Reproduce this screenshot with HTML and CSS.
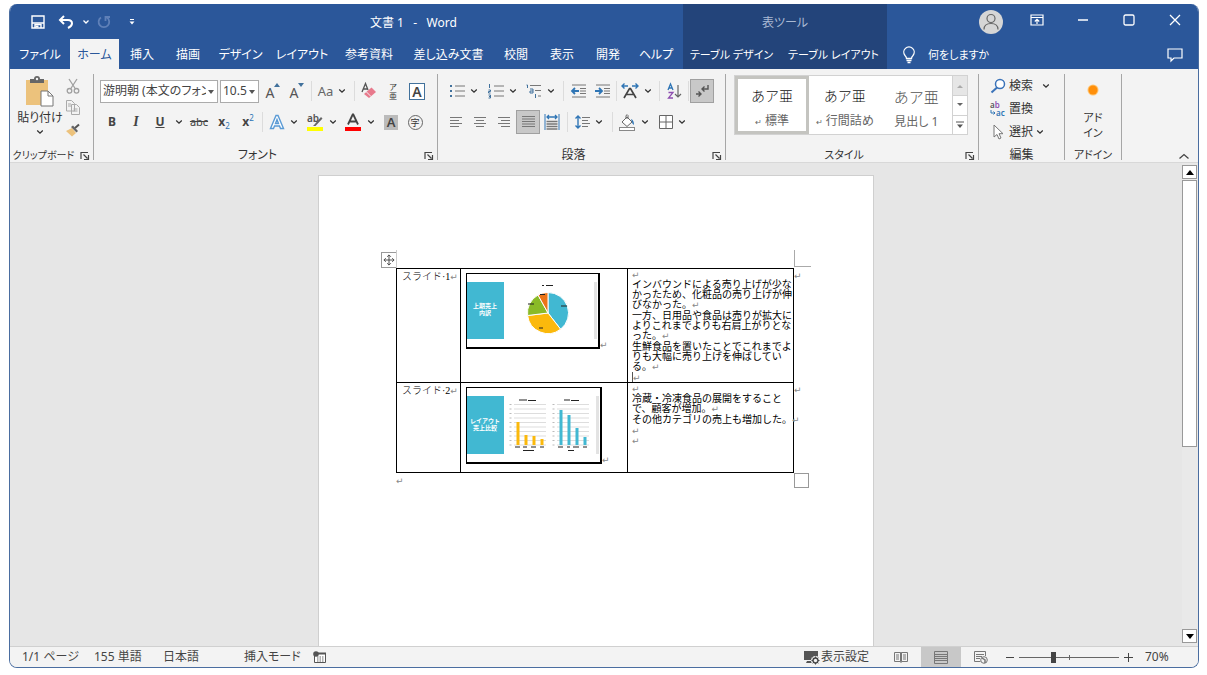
FILE: index.html
```html
<!DOCTYPE html>
<html lang="ja">
<head>
<meta charset="utf-8">
<title>文書 1 - Word</title>
<link rel="stylesheet" href="styles.css">
</head>
<body>
<svg width="0" height="0" class="defs" aria-hidden="true">
  <symbol id="chev" viewBox="0 0 8 6"><path d="M1.2 1.5 4 4.2 6.8 1.5" fill="none" stroke="#333" stroke-width="1.3"/></symbol>
  <symbol id="launch" viewBox="0 0 10 10"><path d="M1 8V1.5h7M3.500 3.500l4 4M8.500 4v4.500H4" fill="none" stroke="#444" stroke-width="1.200"/></symbol>
</svg>
<div class="window">
  <header class="head">
    <div class="head-left">
      <div class="titlebar">
        <div class="quick">
          <button class="qb" aria-label="保存"><svg width="14" height="14" viewBox="0 0 14 14" fill="none" stroke="#fff" stroke-width="1.400"><path d="M1 1h12v12H1zM1.500 8h11"/><path d="M4 13V9.500h6V13"/><path d="M4.500 11.500h3" stroke-width="2"/></svg></button>
          <button class="qb undo" aria-label="元に戻す"><svg width="16" height="14" viewBox="0 0 16 14" fill="none" stroke="#fff" stroke-width="2"><path d="M6 1 2 5l4 4M2.500 5H10q4 0 4 3.500Q14 11 10 13"/></svg></button>
          <button class="qc" aria-label="元に戻す一覧"><svg width="8" height="6" viewBox="0 0 8 6"><path d="M1.500 1.500 4 4l2.500-2.500" fill="none" stroke="#fff" stroke-width="1.300"/></svg></button>
          <button class="qb" aria-label="やり直し"><svg width="14" height="14" viewBox="0 0 14 14" fill="none" stroke="#5f80b8" stroke-width="1.800"><path d="M4 2.500A5.300 5.300 0 1 0 10 2.600M8.500 6V2h4.500"/></svg></button>
          <button class="qb" aria-label="カスタマイズ"><svg width="8" height="8" viewBox="0 0 8 8"><path d="M2 1.500h4" stroke="#fff"/><path d="M1.500 3.500h5L4 6.500z" fill="#fff"/></svg></button>
        </div>
        <h1 class="title">文書 1 &nbsp; - &nbsp; Word</h1>
      </div>
      <nav class="tabs">
        <button>ファイル</button><button class="on">ホーム</button><button>挿入</button><button>描画</button><button>デザイン</button><button>レイアウト</button><button>参考資料</button><button>差し込み文書</button><button>校閲</button><button>表示</button><button>開発</button><button>ヘルプ</button>
      </nav>
    </div>
    <div class="head-ctx">
      <div class="ctx-title">表ツール</div>
      <nav class="ctx-tabs"><button>テーブル デザイン</button><button>テーブル レイアウト</button></nav>
    </div>
    <div class="head-right">
      <div class="wincontrols">
        <button class="avatar" aria-label="アカウント"><svg width="24" height="24" viewBox="0 0 24 24"><circle cx="12" cy="12" r="12" fill="#d6d6d6"/><g fill="none" stroke="#666" stroke-width="1.200"><circle cx="12" cy="8.500" r="4"/><path d="M5 19.500q0-6 7-6t7 6"/></g></svg></button>
        <button aria-label="リボンの表示オプション"><svg width="14" height="12" viewBox="0 0 14 12" fill="none" stroke="#fff" stroke-width="1.200"><path d="M1 1h12v10H1zM1 3.500h12M7 10V5.500M4.800 7.500 7 5.300l2.200 2.200"/></svg></button>
        <button aria-label="最小化"><svg width="12" height="12" viewBox="0 0 12 12"><path d="M1 6h10" stroke="#fff" stroke-width="1.400"/></svg></button>
        <button aria-label="最大化"><svg width="12" height="12" viewBox="0 0 12 12"><rect x="1" y="1" width="10" height="10" rx="1.500" fill="none" stroke="#fff" stroke-width="1.300"/></svg></button>
        <button aria-label="閉じる"><svg width="12" height="12" viewBox="0 0 12 12"><path d="m1 1 10 10M11 1 1 11" stroke="#fff" stroke-width="1.300"/></svg></button>
      </div>
      <div class="askrow">
        <button class="ask"><svg width="14" height="18" viewBox="0 0 14 18" fill="none" stroke="#fff" stroke-width="1.300"><path d="M4.500 12.500Q4.500 11 3 9.500A5.200 5.200 0 1 1 11 9.500Q9.500 11 9.500 12.500zM4.500 14.500h5M5.500 16.500h3"/></svg><span>何をしますか</span></button>
        <button aria-label="コメント"><svg width="16" height="14" viewBox="0 0 16 14" fill="none" stroke="#fff" stroke-width="1.200"><path d="M1 1h14v9H7l-3 3v-3H1z"/></svg></button>
      </div>
    </div>
  </header>

  <section class="ribbon">
    <div class="group">
      <div class="body clip">
        <button class="paste"><svg width="30" height="32" viewBox="0 0 30 32"><rect x="1" y="4" width="22" height="25" fill="#ecc27c"/><path d="M5 3h4q0-3 3-3t3 3h4v4H5z" fill="#666"/><circle cx="12" cy="3" r="1.200" fill="#f3f3f3"/><path d="M16 15h7l5 5v10H16z" fill="#fff" stroke="#777"/><path d="M23 15v5h5" fill="none" stroke="#777"/></svg><span>貼り付け</span><svg width="8" height="6"><use href="#chev"/></svg></button>
        <div class="clipcol">
          <button aria-label="切り取り"><svg width="14" height="15" viewBox="0 0 14 15" fill="none" stroke="#a0a0a0" stroke-width="1.300"><path d="M3 0l6.500 10M11 0 4.500 10"/><circle cx="3.500" cy="11.800" r="2.300"/><circle cx="10.500" cy="11.800" r="2.300"/></svg></button>
          <button aria-label="コピー"><svg width="15" height="15" viewBox="0 0 15 15" fill="#f3f3f3" stroke="#aaa"><path d="M.5.5h5l3 3V11h-8zM5.500 4.500h5l3 3v7h-8z"/><path d="M2 4h3M2 6h3M7.500 9h4M7.500 11h4"/></svg></button>
          <button aria-label="書式のコピー"><svg width="14" height="13" viewBox="0 0 14 13"><path d="m0 7 6-3 4 5-4 3.500z" fill="#ecc27c"/><path d="m5 3 2-1.500 5 5.500-1.500 1.500z" fill="#666"/><path d="m9 4 4-3.500" stroke="#555" stroke-width="2"/></svg></button>
        </div>
      </div>
      <div class="foot"><span class="tiny">クリップボード</span><button aria-label="クリップボードの設定"><svg width="10" height="10"><use href="#launch"/></svg></button></div>
    </div>

    <div class="group">
      <div class="body rows fontrows">
        <div class="row">
          <label class="combo family"><select aria-label="フォント"><option>游明朝 (本文のフォント)</option></select><svg width="6" height="4" viewBox="0 0 6 4"><path d="M0 0h6L3 4z" fill="#555"/></svg></label>
          <label class="combo size"><select aria-label="フォント サイズ"><option>10.5</option></select><svg width="6" height="4" viewBox="0 0 6 4"><path d="M0 0h6L3 4z" fill="#555"/></svg></label>
          <button class="ib ltr" aria-label="拡大">A<svg class="mark" width="6" height="4" viewBox="0 0 6 4"><path d="M0 4h6L3 0z" fill="#41719c"/></svg></button>
          <button class="ib ltr" aria-label="縮小">A<svg class="mark" width="6" height="4" viewBox="0 0 6 4"><path d="M0 0h6L3 4z" fill="#41719c"/></svg></button>
          <i class="sep"></i>
          <button class="split"><span class="aa">Aa</span><svg width="8" height="6"><use href="#chev"/></svg></button>
          <i class="sep"></i>
          <button class="ib" aria-label="書式のクリア"><svg width="18" height="18" viewBox="0 0 18 18"><path d="m2 10 3.500-8.500L8 8M3.500 7h4" fill="none" stroke="#555" stroke-width="1.300"/><path d="m4 12 7.500-6.500 4.500 4.500-7 6z" fill="#e8798c"/><path d="m6.500 10 4.500 4.500" stroke="#f3f3f3"/></svg></button>
          <button class="ib ruby"><span>ア</span><span>亜</span></button>
          <button class="ib"><span class="boxed">A</span></button>
        </div>
        <div class="row">
          <button class="ib"><b>B</b></button>
          <button class="ib"><b class="ital">I</b></button>
          <button class="ib"><b class="under">U</b></button>
          <button class="ch" aria-label="下線の種類"><svg width="8" height="6"><use href="#chev"/></svg></button>
          <button class="ib wide"><s>abc</s></button>
          <button class="ib"><span class="x"><b>x</b><sub>2</sub></span></button>
          <button class="ib"><span class="x"><b>x</b><sup>2</sup></span></button>
          <i class="sep"></i>
          <button class="split" aria-label="文字の効果"><svg width="16" height="16" viewBox="0 0 16 16"><path d="M1.500 14.500 7 1.500h2l5.500 13h-3L10.500 12h-5l-1 2.500zM6.500 9.500h3L8 5.500z" fill="#fff" stroke="#5b9bd5" stroke-width="1.400"/></svg><svg width="8" height="6"><use href="#chev"/></svg></button>
          <button class="split" aria-label="蛍光ペン"><svg width="18" height="18" viewBox="0 0 18 18"><text x="1" y="9" class="svgab">ab</text><path d="m8 12 7-8 1.500 1.500-7 7.500H7z" fill="#666"/><path d="M1 14h16v4H1z" fill="#ff0"/></svg><svg width="8" height="6"><use href="#chev"/></svg></button>
          <button class="split" aria-label="フォントの色"><svg width="18" height="18" viewBox="0 0 18 18"><path d="m4 11.500 4.700-10h.6l4.700 10M5.800 8.500h6.400" fill="none" stroke="#444" stroke-width="1.800"/><path d="M1 14h16v4H1z" fill="#f00"/></svg><svg width="8" height="6"><use href="#chev"/></svg></button>
          <button class="ib"><span class="shade">A</span></button>
          <button class="ib"><span class="circ">字</span></button>
        </div>
      </div>
      <div class="foot"><span>フォント</span><button aria-label="フォントの設定"><svg width="10" height="10"><use href="#launch"/></svg></button></div>
    </div>

    <div class="group">
      <div class="body rows pararows">
        <div class="row">
          <button class="split lo" aria-label="箇条書き"><svg width="16" height="14" viewBox="0 0 16 14"><path d="M1 2h2M1 7h2M1 12h2" stroke="#41719c" stroke-width="2"/><path d="M6 2h10M6 7h10M6 12h10" stroke="#777"/></svg><svg width="8" height="6"><use href="#chev"/></svg></button>
          <button class="split lo" aria-label="段落番号"><svg width="16" height="15" viewBox="0 0 16 15"><path d="M1.500 0v4M.5 6h2v1.500h-2V9h2M.5 11h2v3h-2M1 12.500h1.500" stroke="#41719c" fill="none"/><path d="M6 2h10M6 7h10M6 12h10" stroke="#777"/></svg><svg width="8" height="6"><use href="#chev"/></svg></button>
          <button class="split" aria-label="アウトライン"><svg width="16" height="14" viewBox="0 0 16 14"><path d="M.5 1h1v3M4 5h3v4H4V7h3M9.500 10v4" stroke="#41719c" fill="none"/><path d="M4 1.500h11M9 6.500h6M12 12h3" stroke="#777"/></svg><svg width="8" height="6"><use href="#chev"/></svg></button>
          <i class="sep"></i>
          <button class="ib" aria-label="インデント解除"><svg width="16" height="14" viewBox="0 0 16 14"><path d="M1 1h14M9 4.500h6M9 7h6M9 9.500h6M1 13h14" stroke="#777"/><path d="M1 7h7M4 4 1 7l3 3" fill="none" stroke="#2f75b5" stroke-width="1.800"/></svg></button>
          <button class="ib" aria-label="インデント"><svg width="16" height="14" viewBox="0 0 16 14"><path d="M1 1h14M9 4.500h6M9 7h6M9 9.500h6M1 13h14" stroke="#777"/><path d="M0 7h7M4 4l3 3-3 3" fill="none" stroke="#2f75b5" stroke-width="1.800"/></svg></button>
          <i class="sep tight"></i>
          <button class="split" aria-label="拡張書式"><svg width="18" height="16" viewBox="0 0 18 16"><path d="m3 15 5.500-9.500h1L15 15M5.500 11.500h7" fill="none" stroke="#444" stroke-width="1.700"/><path d="M1 3h6M11 3h6M3.500.5 1 3l2.500 2.500M14.500.5 17 3l-2.500 2.500" fill="none" stroke="#2f75b5" stroke-width="1.400"/></svg><svg width="8" height="6"><use href="#chev"/></svg></button>
          <i class="sep"></i>
          <button class="ib" aria-label="並べ替え"><svg width="16" height="16" viewBox="0 0 16 16" fill="none"><path d="M1 7 3.500 1 6 7M2 5h3" stroke="#2f75b5" stroke-width="1.300"/><path d="M1.500 9.500H6L1.500 15H6" stroke="#8e4fb0" stroke-width="1.300"/><path d="M11 2v12M8 11l3 3 3-3" stroke="#666" stroke-width="1.200"/></svg></button>
          <i class="sep tight"></i>
          <button class="ib pressed" aria-label="編集記号"><svg width="14" height="14" viewBox="0 0 14 14" fill="none" stroke="#555" stroke-width="1.400"><path d="M13 1v4H7M9.500 2.500 7 5l2.500 2.500M1 10h5M3.500 7.500 6 10l-2.500 2.500"/></svg></button>
        </div>
        <div class="row">
          <button class="ib" aria-label="左揃え"><svg width="12" height="10" viewBox="0 0 12 10"><path d="M0 .5h12M0 3.500h9M0 6.500h12M0 9.500h9" stroke="#777"/></svg></button>
          <button class="ib" aria-label="中央揃え"><svg width="12" height="10" viewBox="0 0 12 10"><path d="M0 .5h12M2 3.500h8M0 6.500h12M2 9.500h8" stroke="#777"/></svg></button>
          <button class="ib" aria-label="右揃え"><svg width="12" height="10" viewBox="0 0 12 10"><path d="M0 .5h12M3 3.500h9M0 6.500h12M3 9.500h9" stroke="#777"/></svg></button>
          <button class="ib pressed" aria-label="両端揃え"><svg width="13" height="12" viewBox="0 0 13 12"><path d="M0 .5h13M0 3h13M0 5.500h13M0 8h13M0 10.500h13" stroke="#777"/></svg></button>
          <button class="ib" aria-label="均等割り付け"><svg width="16" height="16" viewBox="0 0 16 16"><path d="M1 0v16M15 0v16" stroke="#2f75b5"/><path d="M3 3h10M5 1 3 3l2 2M11 1l2 2-2 2" fill="none" stroke="#2f75b5" stroke-width="1.300"/><path d="M2.500 7.500h11M2.500 10h11M2.500 12.500h11M2.500 15h11" stroke="#777" stroke-width="1.300"/></svg></button>
          <i class="sep"></i>
          <button class="split" aria-label="行間"><svg width="15" height="14" viewBox="0 0 15 14"><path d="M3 1v12M.5 3.500 3 1l2.500 2.500M.5 10.500 3 13l2.500-2.500" fill="none" stroke="#2f75b5" stroke-width="1.400"/><path d="M7 2.500h8M7 5.500h6M7 8.500h8M7 11.500h6" stroke="#777"/></svg><svg width="8" height="6"><use href="#chev"/></svg></button>
          <i class="sep"></i>
          <button class="split" aria-label="塗りつぶし"><svg width="17" height="17" viewBox="0 0 17 17"><path d="m3 8 5-5 5 5-5 4.500zM7 5V1.500q1.500-1.500 2 0V5" fill="#fff" stroke="#666"/><path d="M12 5q3 1 3 6-2-1-2-3z" fill="#2f75b5"/><rect x=".5" y="13.500" width="15" height="3" fill="#fff" stroke="#888"/></svg><svg width="8" height="6"><use href="#chev"/></svg></button>
          <button class="split" aria-label="罫線"><svg width="14" height="14" viewBox="0 0 14 14"><path d="M.5.5h13v13H.5zM7 0v14M0 7h14" fill="#fff" stroke="#666"/></svg><svg width="8" height="6"><use href="#chev"/></svg></button>
        </div>
      </div>
      <div class="foot"><span>段落</span><button aria-label="段落の設定"><svg width="10" height="10"><use href="#launch"/></svg></button></div>
    </div>

    <div class="group">
      <div class="body stylebody">
        <div class="gallery">
          <button class="style on"><span class="sample">あア亜</span><span class="sname"><small>↵</small> 標準</span></button>
          <button class="style"><span class="sample">あア亜</span><span class="sname"><small>↵</small> 行間詰め</span></button>
          <button class="style"><span class="sample big">あア亜</span><span class="sname">見出し 1</span></button>
          <div class="gscroll">
            <button class="dis" aria-label="上へ"><svg width="6" height="4" viewBox="0 0 6 4"><path d="M0 4h6L3 1z" fill="#aaa"/></svg></button>
            <button aria-label="下へ"><svg width="6" height="4" viewBox="0 0 6 4"><path d="M0 0h6L3 3z" fill="#666"/></svg></button>
            <button aria-label="その他"><svg width="8" height="8" viewBox="0 0 8 8"><path d="M0 1h8" stroke="#555"/><path d="M1 3.500h6L4 7z" fill="#555"/></svg></button>
          </div>
        </div>
      </div>
      <div class="foot"><span class="narrow">スタイル</span><button aria-label="スタイルの設定"><svg width="10" height="10"><use href="#launch"/></svg></button></div>
    </div>

    <div class="group">
      <div class="body edit">
        <button><svg width="16" height="16" viewBox="0 0 16 16" fill="none" stroke="#3b73b9" stroke-width="1.500"><circle cx="10" cy="6" r="4.500" fill="#fff"/><path d="m7 9.500-5.500 5" stroke-width="2"/></svg><span>検索</span><svg class="far" width="8" height="6"><use href="#chev"/></svg></button>
        <button><svg width="16" height="16" viewBox="0 0 16 16"><text x="0" y="7" class="svgrep">a<tspan class="pur">b</tspan></text><text x="6" y="15" class="svgrep blue">ac</text><path d="M1 9v3h4M3.500 10.500 5 12l-1.500 1.500" fill="none" stroke="#2f75b5"/></svg><span>置換</span></button>
        <button><svg width="16" height="16" viewBox="0 0 16 16"><path d="M4 1v12l3-2.500 2 4.500 2-1-2-4.300h4z" fill="#fff" stroke="#777"/></svg><span>選択</span><svg width="8" height="6"><use href="#chev"/></svg></button>
      </div>
      <div class="foot"><span>編集</span></div>
    </div>

    <div class="group">
      <div class="body addin"><button><svg width="12" height="12" viewBox="0 0 12 12"><circle cx="6" cy="6" r="5.500" fill="#ffc573"/><circle cx="6" cy="6" r="4.500" fill="#ff8f0a"/></svg><span>アド<br>イン</span></button></div>
      <div class="foot"><span class="narrow">アドイン</span></div>
    </div>
    <div class="rest"><button aria-label="リボンを折りたたむ"><svg width="12" height="8" viewBox="0 0 12 8"><path d="m1.500 6.500 4.500-4 4.500 4" fill="none" stroke="#444" stroke-width="1.300"/></svg></button></div>
  </section>

  <div class="work">
    <main class="canvas">
      <article class="page">
        <div class="tablewrap">
          <span class="handle"><svg width="13" height="13" viewBox="0 0 13 13" fill="none" stroke="#444"><path d="M6.500 1v11M1 6.500h11M4.500 3l2-2 2 2M4.500 10l2 2 2-2M3 4.500l-2 2 2 2M10 4.500l2 2-2 2"/></svg></span>
          <span class="crop-l"></span><span class="crop-r"></span><span class="resize"></span>
          <span class="end e1">↵</span><span class="end e2">↵</span>
          <table class="doc">
            <colgroup><col class="c1"><col class="c2"><col></colgroup>
            <tr class="r1">
              <td class="name">スライド·1<i class="ret">↵</i></td>
              <td class="pic"><svg width="134" height="76" viewBox="0 0 134 76"><path d="M0 0h134v76H0z" fill="#000"/><path d="M1 1h131v73H1z" fill="#fff"/><path d="M1 9h37v57H1z" fill="#41b8d2"/><path d="M128 9h3v57h-3z" fill="#e3e3e3"/>
                <text x="19" y="35" class="slidet">上期売上</text><text x="19" y="42" class="slidet">内訳</text>
                <path d="M82 40V19.500a20.500 20.500 0 0 1 12.600 36.700z" fill="#41b8d2" stroke="#fff"/><path d="M82 40 94.600 56.200A20.500 20.500 0 0 1 61.600 42.500z" fill="#fbb90c" stroke="#fff"/><path d="M82 40 61.600 42.500A20.500 20.500 0 0 1 72 22z" fill="#8aba27" stroke="#fff"/><path d="M82 40 72 22a20.500 20.500 0 0 1 10-2.500z" fill="#ec7417" stroke="#fff"/>
                <path d="M76 12.500h2M80 12.500h7M95 33h6M62 31h6M74 21.500h5M73 55h4" stroke="#222" stroke-width="1.200"/></svg><i class="ret">↵</i></td>
              <td class="note"><p class="lead"><i class="ret">↵</i></p><p>インバウンドによる売り上げが少な<br>かったため、化粧品の売り上げが伸<br>びなかった。<i class="ret">↵</i></p><p>一方、日用品や食品は売りが拡大に<br>よりこれまでよりも右肩上がりとな<br>った。<i class="ret">↵</i></p><p>生鮮食品を置いたことでこれまでよ<br>りも大幅に売り上げを伸ばしてい<br>る。<i class="ret">↵</i></p><p class="caret"><i class="ret">↵</i></p></td>
            </tr>
            <tr class="r2">
              <td class="name">スライド·2<i class="ret">↵</i></td>
              <td class="pic"><svg width="136" height="77" viewBox="0 0 136 77"><path d="M0 0h136v77H0z" fill="#000"/><path d="M1 1h133v74H1z" fill="#fff"/><path d="M1 9h37v58H1z" fill="#41b8d2"/><path d="M130 9h3v58h-3z" fill="#e3e3e3"/>
                <text x="19" y="36" class="slidet">レイアウト</text><text x="19" y="43" class="slidet">売上比較</text>
                <path d="M48 17.500h32M48 22h32M48 26.500h32M48 31h32M48 35.500h32M48 40h32M48 44.500h32M48 49h32M48 53.500h32M48 58h32M91 17.500h32M91 22h32M91 26.500h32M91 31h32M91 35.500h32M91 40h32M91 44.500h32M91 49h32M91 53.500h32M91 58h32" stroke="#ddd"/>
                <path d="M44.500 17v42M87.500 17v42" stroke="#bbb" stroke-width="2" stroke-dasharray="1 3.500"/>
                <path d="M52 58V35M60 58V48M68 58V49M76 58v-6" stroke="#fbb90c" stroke-width="3"/><path d="M95 58V23M103 58V28M111 58V41M119 58v-8" stroke="#41b8d2" stroke-width="3"/>
                <path d="M53 13h8M62 13.500h8M98 13h6M105 13.500h8M49 60h5M57 60h4M65 60h5M74 60h4M92 60h5M101 60h3M107 60h6M117 60h4M57 63.500h11M102 63.500h6" stroke="#222" stroke-width="1.200"/></svg><i class="ret">↵</i></td>
              <td class="note"><p class="lead"><i class="ret">↵</i></p><p>冷蔵・冷凍食品の展開をすること<br>で、顧客が増加。<i class="ret">↵</i></p><p>その他カテゴリの売上も増加した。<i class="ret clipd">↵</i></p><p class="lead"><i class="ret">↵</i></p><p><i class="ret">↵</i></p></td>
            </tr>
          </table>
        </div>
        <p class="after"><i class="ret">↵</i></p>
      </article>
    </main>
    <div class="vscroll">
      <button aria-label="上へスクロール"><svg width="8" height="5" viewBox="0 0 8 5"><path d="M0 5h8L4 0z" fill="#000"/></svg></button>
      <div class="thumb"></div>
      <button aria-label="下へスクロール"><svg width="8" height="5" viewBox="0 0 8 5"><path d="M0 0h8L4 5z" fill="#000"/></svg></button>
    </div>
  </div>

  <footer class="status">
    <span class="s1">1/1 ページ</span><span class="s2">155 単語</span><span class="s3">日本語</span><span class="s4">挿入モード</span>
    <svg width="13" height="12" viewBox="0 0 13 12"><path d="M1.500 2.500h11v9h-11z" fill="#fff" stroke="#555"/><path d="M5 1.500h8v2H5z" fill="#555"/><circle cx="3" cy="3" r="2.800" fill="#555"/><path d="M4 6h7M4 8h7M4 10h7" stroke="#666" stroke-dasharray="1.500 1"/></svg>
    <div class="sright">
      <button class="disp"><svg width="16" height="15" viewBox="0 0 16 15"><path d="M0 1h14v9H0zM3 11h5v2H2z" fill="#555"/><circle cx="11.500" cy="10.500" r="4.500" fill="#f3f3f3"/><circle cx="11.500" cy="10.500" r="2.500" fill="none" stroke="#444" stroke-width="1.300"/><path d="M11.500 6.500v8M7.500 10.500h8M8.700 7.700l5.600 5.600M14.300 7.700l-5.600 5.600" stroke="#444"/><circle cx="11.500" cy="10.500" r="1.700" fill="#f3f3f3"/></svg><span>表示設定</span></button>
      <button class="view" aria-label="閲覧モード"><svg width="14" height="12" viewBox="0 0 14 12" fill="none" stroke="#777"><path d="M.5 1.500h6v9h-6zM7.500 1.500h6v9h-6zM7 1v11M2 4h3M2 6h3M2 8h3M9 4h3M9 6h3M9 8h3"/></svg></button>
      <button class="view on" aria-label="印刷レイアウト"><svg width="14" height="13" viewBox="0 0 14 13" fill="none" stroke="#777"><path d="M.5.5h13v12H.5zM1 3.500h12M1 5.500h12M1 7.500h12M1 9.500h12"/></svg></button>
      <button class="view" aria-label="Web レイアウト"><svg width="14" height="13" viewBox="0 0 14 13" fill="none" stroke="#777"><path d="M11.500 5V.5H.5v10h6M2 3.500h8M2 5.500h6M2 7.500h4"/><circle cx="10" cy="9" r="3.300" fill="#f3f3f3"/><path d="m8 7 3 2v3" stroke-width="1.500"/></svg></button>
      <button class="zb" aria-label="縮小"><svg width="9" height="9" viewBox="0 0 9 9"><path d="M0 4.500h8" stroke="#444"/></svg></button>
      <input class="zoom" type="range" min="0" max="100" value="34" aria-label="ズーム">
      <button class="zb" aria-label="拡大"><svg width="9" height="9" viewBox="0 0 9 9"><path d="M0 4.500h9M4.500 0v9" stroke="#444"/></svg></button>
      <span class="pct">70%</span>
    </div>
  </footer>
</div>
</body>
</html>
```

FILE: styles.css
```css
* { box-sizing: border-box; }
body {
  margin: 0;
  padding: 4px 8px 7px 9px;
  height: 100vh;
  background: #fff;
  color: #333;
  font: 12px/16px "Noto Sans", "Noto Sans CJK JP", sans-serif;
  font-feature-settings: "palt";
}
button {
  display: flex;
  align-items: center;
  justify-content: center;
  padding: 0;
  border: 0;
  background: none;
  color: inherit;
  font: inherit;
  font-feature-settings: inherit;
  white-space: nowrap;
}
svg { display: block; flex: none; overflow: visible; }
p, h1 { margin: 0; }
.defs { position: absolute; }

.window {
  display: flex;
  flex-direction: column;
  height: 100%;
  border: 1px solid #4a6da0;
  border-top: 0;
  border-radius: 8px;
  overflow: hidden;
  background: #f3f3f3;
}

/* title bar and tabs */
.head { display: flex; background: #2b579a; color: #fff; }
.head-left { flex: none; width: 673px; }
.titlebar { display: flex; height: 35px; }
.quick { display: flex; align-items: center; padding-left: 15px; width: 300px; }
.qb { width: 26px; height: 24px; }
.qb.undo { width: 30px; }
.qb:last-child { width: 30px; }
.qc { width: 10px; height: 24px; }
.title { padding: 11px 0 0 60px; font-size: 12px; font-weight: 400; white-space: nowrap; }
.tabs {
  display: grid;
  grid-template-columns: 60px 49px 46px 46px 59px 64px 70px 89px 46px 46px 46px 50px;
  height: 30px;
}
.tabs button { padding-top: 2px; }
.tabs .on { background: #f3f3f3; color: #2b579a; }
.head-ctx { flex: none; width: 204px; background: #23447a; }
.ctx-title { height: 35px; padding-top: 11px; text-align: center; color: #a9b9d3; }
.ctx-tabs { display: grid; grid-template-columns: 97px 107px; height: 30px; font-size: 11px; }
.ctx-tabs button { padding-top: 2px; }
.head-right { flex: 1; }
.wincontrols { display: flex; justify-content: flex-end; height: 35px; }
.wincontrols button { width: 46px; height: 32px; }
.wincontrols .avatar { height: 35px; }
.askrow { display: flex; justify-content: space-between; height: 30px; padding: 2px 15px 0 15px; }
.ask { gap: 12px; font-size: 11px; }

/* ribbon */
.ribbon {
  display: grid;
  grid-template-columns: 84px 344px 288px 253px 86px 57px 1fr;
  padding: 5px 0 2px;
  border-bottom: 1px solid #d8d8d8;
  background: #f3f3f3;
}
.group { display: flex; flex-direction: column; border-right: 1px solid #a6a6a6; }
.body { flex: none; height: 74px; }
.foot { display: flex; height: 12px; }
.foot span { flex: 1; text-align: center; line-height: 14px; white-space: nowrap; }
.foot button { width: 16px; height: 16px; }
.foot .narrow { font-size: 11px; }
.foot .tiny { font-size: 10px; }
.clip { display: flex; padding-top: 2px; }
.paste { flex-direction: column; justify-content: flex-start; width: 54px; margin-left: 3px; gap: 2px; }
.paste svg:last-child { margin-top: 1px; }
.clipcol { display: flex; flex-direction: column; }
.clipcol button { width: 12px; height: 23px; }
.clipcol button:first-child { height: 20px; }
.rows { display: flex; flex-direction: column; gap: 7px; padding-top: 5px; }
.fontrows { padding-left: 6px; }
.pararows { padding-left: 6px; }
.row { display: flex; align-items: center; height: 24px; }
.ib { width: 24px; height: 24px; }
.ib.wide { width: 26px; }
.ch { width: 14px; height: 24px; }
.split { gap: 5px; width: 36px; height: 24px; margin-right: 2px; }
.lo { width: 38px; margin-right: 1px; }
.sep { width: 1px; height: 20px; margin: 0 2px; background: #dcdcdc; }
.pararows .sep { margin: 0 3px; }
.pararows .tight { margin: 0 1px; }
.combo { position: relative; display: block; height: 23px; border: 1px solid #ababab; background: #fff; }
.family { width: 118px; margin-right: 2px; }
.size { width: 39px; margin-right: 2px; }
.combo select {
  appearance: none;
  width: 100%;
  height: 21px;
  padding: 0 11px 0 2px;
  border: 0;
  background: none;
  color: #444;
  font: inherit;
  font-feature-settings: inherit;
}
.combo svg { position: absolute; right: 3px; top: 9px; }
.ltr { align-items: flex-end; font-size: 14px; line-height: 20px; color: #555; }
.mark { align-self: flex-start; margin-top: 4px; }
.aa { font-size: 13px; color: #666; }
.ruby { flex-direction: column; font-size: 8px; line-height: 9px; }
.boxed { width: 16px; border: 1px solid #41719c; font-size: 14px; font-weight: 600; line-height: 15px; background: #fff; color: #444; }
.shade { width: 14px; font-size: 13px; font-weight: 600; line-height: 15px; background: #bbb; color: #444; }
.circ { width: 15px; border: 1px solid #666; border-radius: 50%; font-size: 9px; line-height: 13px; }
.ital { font-family: "Liberation Serif", serif; font-style: italic; font-size: 14px; }
.under { text-decoration: underline; }
.row b, .row s { color: #444; }
.row s { font-size: 11px; }
.x sub, .x sup { font-size: 8px; line-height: 8px; color: #2f75b5; }
.svgab { font-size: 10px; font-weight: 600; fill: #555; }
.svgrep { font-size: 8px; font-weight: 600; fill: #555; }
.pur { fill: #8e4fb0; }
.blue { fill: #2f75b5; }
.pressed { border: 1px solid #a0a0a0; background: #c8c8c8; }
.stylebody { padding: 1px 10px 0 8px; }
.gallery { display: grid; grid-template-columns: 74px 1fr 1fr 15px; height: 60px; border: 1px solid #d2d2d2; background: #fff; }
.style { flex-direction: column; gap: 7px; padding-top: 6px; }
.style.on { border: 3px solid #c4c4c0; }
.sample { font-size: 14px; font-weight: 300; line-height: 20px; color: #111; font-feature-settings: normal; }
.big { font-size: 15px; color: #555; }
.sname { color: #666; }
.sname small { font-size: 8px; }
.gscroll { display: grid; grid-template-rows: 1fr 1fr 1fr; border-left: 1px solid #d2d2d2; }
.gscroll button + button { border-top: 1px solid #d2d2d2; }
.gscroll .dis { background: #e6e6e6; }
.edit { display: flex; flex-direction: column; align-items: flex-start; padding-left: 11px; }
.edit button { gap: 3px; height: 23px; }
.edit .far { margin-left: 6px; }
.addin { display: flex; justify-content: center; }
.addin button { flex-direction: column; justify-content: flex-start; gap: 14px; padding-top: 10px; font-size: 11px; line-height: 15px; }
.rest { display: flex; align-items: flex-end; justify-content: flex-end; padding-right: 8px; }

/* document area */
.work { display: flex; flex: 1; min-height: 0; background: #e6e6e6; }
.canvas { display: flex; flex: 1; justify-content: center; padding-top: 12px; overflow: hidden; }
.page { width: 556px; padding: 92px 77px 0; border: 1px solid #cfcfcf; border-bottom: 0; background: #fff; color: #000; }
.tablewrap { position: relative; width: 398px; }
.doc { width: 100%; table-layout: fixed; border-collapse: collapse; font-size: 10px; line-height: 10px; font-feature-settings: normal; }
.doc td { padding: 0; border: 1px solid #000; vertical-align: top; white-space: nowrap; }
.c1 { width: 64px; }
.c2 { width: 167px; }
.r1 { height: 114px; }
.r2 { height: 90px; }
.doc .name { padding: 3px 0 0 5px; font-family: "Liberation Serif", "Noto Sans CJK JP", serif; font-weight: 300; }
.doc .pic { padding: 4px 0 0 5px; }
.pic svg { display: inline-block; vertical-align: bottom; }
.slidet { fill: #fff; font-size: 6px; font-weight: 700; text-anchor: middle; }
.doc .note { padding: 0 0 0 4px; }
.note p { margin-bottom: 1px; }
.note .lead, .note p:last-child { margin-bottom: 0; }
.ret { font: 9px/0 "DejaVu Sans", sans-serif; color: #888; }
.clipd { display: inline-block; width: 1px; }
.caret { border-left: 1px solid #555; }
.handle { position: absolute; left: -15px; top: -16px; padding: 1px; border: 1px solid #999; background: #fff; }
.handle svg { width: 12px; height: 12px; }
.crop-l { position: absolute; left: 0; top: -18px; width: 1px; height: 18px; background: #ccc; }
.crop-r { position: absolute; left: 398px; top: -18px; width: 17px; height: 17px; border-left: 1px solid #aaa; border-bottom: 1px solid #aaa; }
.resize { position: absolute; left: 398px; bottom: -15px; width: 15px; height: 15px; border: 1px solid #999; }
.end { position: absolute; left: 398px; font: 9px/10px "DejaVu Sans", sans-serif; color: #888; }
.e1 { top: 3px; }
.e2 { top: 117px; }
.after { padding-top: 2px; line-height: 10px; }

.vscroll { display: flex; flex-direction: column; width: 16px; padding: 2px 1px 3px 0; background: #e9e9e9; }
.vscroll button { height: 14px; border: 1px solid #999; background: #fff; }
.vscroll .thumb { height: 267px; margin: 1px 0 auto; border: 1px solid #999; background: #fff; }

/* status bar */
.status { display: flex; flex: none; align-items: center; height: 21px; padding-left: 12px; border-top: 1px solid #d0d0d0; background: #f3f3f3; color: #444; white-space: nowrap; }
.s1 { width: 72px; }
.s2 { width: 69px; }
.s3 { width: 81px; }
.s4 { width: 69px; }
.sright { display: flex; align-items: center; height: 100%; margin-left: auto; padding-right: 26px; }
.disp { margin-right: 12px; gap: 1px; }
.view { width: 40px; height: 100%; }
.view.on { background: #c8c8c8; }
.zb { width: 18px; height: 20px; }
.zoom {
  appearance: none;
  width: 100px;
  height: 12px;
  margin: 0;
  background:
    linear-gradient(#666, #666) center / 1px 5px no-repeat,
    linear-gradient(#666, #666) center / 100% 1px no-repeat;
}
.zoom::-webkit-slider-thumb { appearance: none; width: 5px; height: 11px; background: #444; }
.pct { width: 27px; margin-left: 8px; }
```
